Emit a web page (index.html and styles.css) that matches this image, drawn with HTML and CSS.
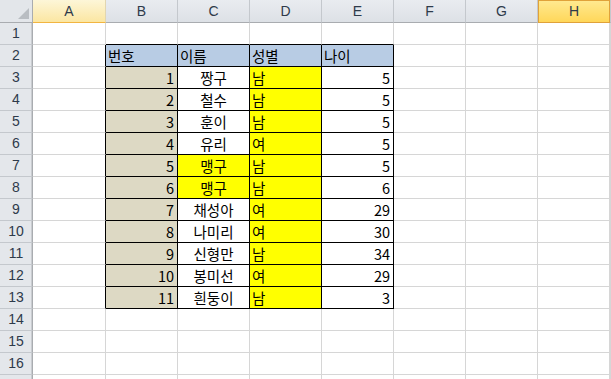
FILE: index.html
```html
<!DOCTYPE html>
<html lang="ko">
<head>
<meta charset="utf-8">
<link rel="stylesheet" href="styles.css">
</head>
<body>
<div class="sheet">
  <div class="row hdr">
    <div class="corner"><span class="tri"></span></div>
    <div class="ch selA">A</div><div class="ch">B</div><div class="ch">C</div><div class="ch">D</div>
    <div class="ch">E</div><div class="ch">F</div><div class="ch">G</div><div class="ch selH">H</div><div class="ch"></div>
  </div>
  <div class="row"><div class="rh">1</div><div class="c"></div><div class="c tt"></div><div class="c tt"></div><div class="c tt"></div><div class="c tt"></div><div class="c"></div><div class="c"></div><div class="c"></div><div class="c"></div></div>
  <div class="row"><div class="rh">2</div><div class="c tl"></div><div class="c t head">번호</div><div class="c t head">이름</div><div class="c t head">성별</div><div class="c t head">나이</div><div class="c"></div><div class="c"></div><div class="c"></div><div class="c"></div></div>
  <div class="row"><div class="rh">3</div><div class="c tl"></div><div class="c t num tan">1</div><div class="c t mid">짱구</div><div class="c t yel">남</div><div class="c t num">5</div><div class="c"></div><div class="c"></div><div class="c"></div><div class="c"></div></div>
  <div class="row"><div class="rh">4</div><div class="c tl"></div><div class="c t num tan">2</div><div class="c t mid">철수</div><div class="c t yel">남</div><div class="c t num">5</div><div class="c"></div><div class="c"></div><div class="c"></div><div class="c"></div></div>
  <div class="row"><div class="rh">5</div><div class="c tl"></div><div class="c t num tan">3</div><div class="c t mid">훈이</div><div class="c t yel">남</div><div class="c t num">5</div><div class="c"></div><div class="c"></div><div class="c"></div><div class="c"></div></div>
  <div class="row"><div class="rh">6</div><div class="c tl"></div><div class="c t num tan">4</div><div class="c t mid">유리</div><div class="c t yel">여</div><div class="c t num">5</div><div class="c"></div><div class="c"></div><div class="c"></div><div class="c"></div></div>
  <div class="row"><div class="rh">7</div><div class="c tl"></div><div class="c t num tan">5</div><div class="c t mid yel">맹구</div><div class="c t yel">남</div><div class="c t num">5</div><div class="c"></div><div class="c"></div><div class="c"></div><div class="c"></div></div>
  <div class="row"><div class="rh">8</div><div class="c tl"></div><div class="c t num tan">6</div><div class="c t mid yel">맹구</div><div class="c t yel">남</div><div class="c t num">6</div><div class="c"></div><div class="c"></div><div class="c"></div><div class="c"></div></div>
  <div class="row"><div class="rh">9</div><div class="c tl"></div><div class="c t num tan">7</div><div class="c t mid">채성아</div><div class="c t yel">여</div><div class="c t num">29</div><div class="c"></div><div class="c"></div><div class="c"></div><div class="c"></div></div>
  <div class="row"><div class="rh">10</div><div class="c tl"></div><div class="c t num tan">8</div><div class="c t mid">나미리</div><div class="c t yel">여</div><div class="c t num">30</div><div class="c"></div><div class="c"></div><div class="c"></div><div class="c"></div></div>
  <div class="row"><div class="rh">11</div><div class="c tl"></div><div class="c t num tan">9</div><div class="c t mid">신형만</div><div class="c t yel">남</div><div class="c t num">34</div><div class="c"></div><div class="c"></div><div class="c"></div><div class="c"></div></div>
  <div class="row"><div class="rh">12</div><div class="c tl"></div><div class="c t num tan">10</div><div class="c t mid">봉미선</div><div class="c t yel">여</div><div class="c t num">29</div><div class="c"></div><div class="c"></div><div class="c"></div><div class="c"></div></div>
  <div class="row"><div class="rh">13</div><div class="c tl"></div><div class="c t num tan">11</div><div class="c t mid">흰둥이</div><div class="c t yel">남</div><div class="c t num">3</div><div class="c"></div><div class="c"></div><div class="c"></div><div class="c"></div></div>
  <div class="row"><div class="rh">14</div><div class="c"></div><div class="c"></div><div class="c"></div><div class="c"></div><div class="c"></div><div class="c"></div><div class="c"></div><div class="c"></div><div class="c"></div></div>
  <div class="row"><div class="rh">15</div><div class="c"></div><div class="c"></div><div class="c"></div><div class="c"></div><div class="c"></div><div class="c"></div><div class="c"></div><div class="c"></div><div class="c"></div></div>
  <div class="row"><div class="rh">16</div><div class="c"></div><div class="c"></div><div class="c"></div><div class="c"></div><div class="c"></div><div class="c"></div><div class="c"></div><div class="c"></div><div class="c"></div></div>
  <div class="row"><div class="rh"></div><div class="c"></div><div class="c"></div><div class="c"></div><div class="c"></div><div class="c"></div><div class="c"></div><div class="c"></div><div class="c"></div><div class="c"></div></div>
</div>
</body>
</html>
```

FILE: styles.css
```css
html, body {
  margin: 0;
  padding: 0;
  background: #ffffff;
  overflow: hidden;
}
.sheet {
  width: 611px;
  height: 379px;
  overflow: hidden;
  font-family: "Noto Sans CJK KR", "Noto Sans", sans-serif;
  font-size: 14.5px;
  color: #000;
}
.row {
  display: grid;
  grid-template-columns: 33px 73px repeat(7, 72px) 1fr;
  height: 22px;
}
.row > div {
  box-sizing: border-box;
  border-right: 1px solid #d6d6d6;
  border-bottom: 1px solid #d6d6d6;
  line-height: 21px;
  white-space: nowrap;
  overflow: hidden;
}
.row.hdr {
  height: 23px;
}
.hdr > div {
  line-height: 22px;
}
.corner {
  position: relative;
  background: #e3e6ea;
  border-right: 1px solid #a9acb0 !important;
  border-bottom: 1px solid #a9acb0 !important;
}
.tri {
  position: absolute;
  right: 3px;
  bottom: 3px;
  width: 0;
  height: 0;
  border-left: 11px solid transparent;
  border-bottom: 11px solid #b9bdc2;
}
.ch {
  background: linear-gradient(#e9ecf0, #dde1e6);
  border-right: 1px solid #c4c8cd !important;
  border-bottom: 1px solid #a9acb0 !important;
  text-align: center;
  font-family: "Liberation Sans", "Noto Sans", sans-serif;
  font-size: 14px;
  color: #2e3a4a;
}
.ch.selA {
  background: linear-gradient(#fdf6d8, #fbe6a2);
  border-bottom: 1px solid #f2b541 !important;
  border-right: 1px solid #e2d6b0 !important;
}
.ch.selH {
  background: linear-gradient(#ffe98f, #ffd75a);
  border: 1px solid #e0a23a !important;
  line-height: 20px;
}
.rh {
  background: #e4e7eb;
  border-right: 1px solid #a9acb0 !important;
  border-bottom: 1px solid #c4c8cd !important;
  text-align: center;
  font-family: "Liberation Sans", "Noto Sans", sans-serif;
  font-size: 14px;
  color: #2e3a4a;
  box-shadow: inset -1px 0 0 #c9ccd0;
}
.c.tt {
  border-bottom-color: #000;
}
.c.tl {
  border-right-color: #000;
}
.c.t {
  border-right-color: #000;
  border-bottom-color: #000;
}
.head {
  background: #b8cce4;
  padding-left: 2px;
}
.tan {
  background: #ddd9c4;
}
.yel {
  background: #ffff00;
  padding-left: 2px;
}
.num {
  text-align: right;
  padding-right: 3px;
}
.mid {
  text-align: center;
  padding-left: 0;
}
```
